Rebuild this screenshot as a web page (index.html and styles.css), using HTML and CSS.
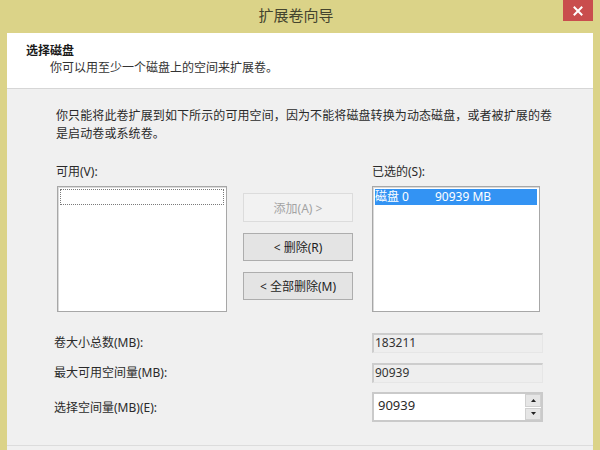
FILE: index.html
```html
<!DOCTYPE html>
<html lang="zh-CN">
<head>
<meta charset="utf-8">
<title>扩展卷向导</title>
<link rel="stylesheet" href="styles.css">
</head>
<body>
<div class="window">
  <div class="titlebar">
    <div></div>
    <div class="title">扩展卷向导</div>
    <div class="tb-right">
      <div class="close"><svg width="10" height="10" viewBox="0 0 10 10"><path d="M1.5 1.5L8.5 8.5M8.5 1.5L1.5 8.5" stroke="#fff" stroke-width="2" stroke-linecap="square"/></svg></div>
    </div>
  </div>
  <div class="client">
    <div class="header">
      <div class="h-title">选择磁盘</div>
      <div class="h-sub">你可以用至少一个磁盘上的空间来扩展卷。</div>
    </div>
    <div class="body">
      <p class="intro">你只能将此卷扩展到如下所示的可用空间，因为不能将磁盘转换为动态磁盘，或者被扩展的卷<br>是启动卷或系统卷。</p>
      <div class="picker">
        <div class="lbl">可用(V):</div>
        <div></div>
        <div class="lbl">已选的(S):</div>
        <div class="list list-left"><div class="focus"></div></div>
        <div class="btns">
          <div class="btn disabled">添加(A) &gt;</div>
          <div class="btn">&lt; 删除(R)</div>
          <div class="btn">&lt; 全部删除(M)</div>
        </div>
        <div class="list list-right">
          <div class="sel"><span class="sel-name">磁盘 0</span><span>90939 MB</span></div>
        </div>
      </div>
      <div class="fields">
        <div class="f-lbl">卷大小总数(MB):</div>
        <div class="ro">183211</div>
        <div class="f-lbl">最大可用空间量(MB):</div>
        <div class="ro">90939</div>
        <div class="f-lbl">选择空间量(MB)(E):</div>
        <div class="spin">
          <div class="spin-val">90939</div>
          <div class="spin-btns">
            <div class="sb"><svg width="5" height="3" viewBox="0 0 5 3"><path d="M0 3L2.5 0L5 3Z" fill="#222"/></svg></div>
            <div class="sb"><svg width="5" height="3" viewBox="0 0 5 3"><path d="M0 0L5 0L2.5 3Z" fill="#222"/></svg></div>
          </div>
        </div>
      </div>
    </div>
    <div class="footer"></div>
  </div>
</div>
</body>
</html>
```
FILE: styles.css
```css
* { box-sizing: border-box; }
html, body { margin: 0; padding: 0; }
body {
  width: 600px;
  height: 450px;
  overflow: hidden;
  font-family: "Noto Sans", "Noto Sans CJK SC", sans-serif;
  font-size: 12px;
  color: #262626;
}
.window {
  width: 600px;
  height: 450px;
  background: #dbd388;
  display: flex;
  flex-direction: column;
  padding: 0 7px;
}
.titlebar {
  height: 33px;
  flex: none;
  display: grid;
  grid-template-columns: 1fr auto 1fr;
  margin: 0 -7px;
}
.title {
  font-family: "Noto Sans CJK SC", sans-serif;
  font-size: 15px;
  line-height: 30px;
  color: #44442e;
  padding-right: 8px;
}
.tb-right {
  display: flex;
  justify-content: flex-end;
  padding-right: 7px;
}
.close {
  width: 30px;
  height: 21px;
  background: #c94d4d;
  display: flex;
  align-items: center;
  justify-content: center;
}
.client {
  flex: 1;
  background: #f0f0f0;
  display: flex;
  flex-direction: column;
}
.header {
  height: 56px;
  flex: none;
  background: #fff;
  border-bottom: 1px solid #d6d6d6;
  padding: 9px 0 0 19px;
}
.h-title {
  font-family: "Noto Sans CJK SC", sans-serif;
  font-weight: 700;
  line-height: 16px;
  color: #1a1a1a;
}
.h-sub {
  font-family: "Noto Sans CJK SC", sans-serif;
  line-height: 16px;
  margin: 1px 0 0 24px;
  color: #333;
}
.body {
  flex: 1;
  padding-top: 17px;
}
.intro {
  margin: 0 0 0 49px;
  line-height: 18px;
  font-family: "Noto Sans CJK SC", sans-serif;
  letter-spacing: 0.1px;
  color: #2a2a2a;
}
.picker {
  margin: 22px 0 0 49px;
  display: grid;
  grid-template-columns: 171px 110px 171px;
  column-gap: 16px;
  row-gap: 6px;
}
.picker .list-right, .picker .lbl:nth-child(3) { margin-left: 3px; }
.lbl {
  line-height: 16px;
  color: #2a2a2a;
}
.list {
  height: 126px;
  background: #fff;
  border: 1px solid #a7a7a7;
  box-shadow: inset 1px 1px 0 #dadada;
  padding: 2px;
}
.list-left { margin-left: 1px; }
.focus {
  height: 16px;
  border: 1px dotted #7a7a7a;
}
.sel {
  height: 16px;
  background: #3393f3;
  color: #fff;
  line-height: 16px;
  display: flex;
}
.sel-name { width: 60px; }
.btns {
  padding-top: 7px;
  display: flex;
  flex-direction: column;
  gap: 11px;
}
.btn {
  height: 28px;
  border: 1px solid #adadad;
  background: #e4e4e4;
  display: flex;
  align-items: center;
  justify-content: center;
  color: #1e1e1e;
}
.btn.disabled {
  height: 29px;
  background: #f2f2f2;
  border-color: #dcdcdc;
  color: #a3a3a3;
}
.fields {
  margin: 21px 0 0 47px;
  display: grid;
  grid-template-columns: 318px 171px;
  row-gap: 10px;
  align-items: center;
}
.f-lbl {
  line-height: 16px;
  color: #2a2a2a;
}
.ro {
  height: 20px;
  border-top: 2px solid #cdcdcd;
  border-left: 2px solid #cdcdcd;
  border-right: 1px solid #e6e6e6;
  border-bottom: 1px solid #e6e6e6;
  background: #eeeeee;
  line-height: 16px;
  padding-left: 1px;
  color: #333;
}
.spin {
  height: 30px;
  margin-top: -1px;
  border: 2px solid #cacaca;
  background: #fff;
  display: flex;
}
.spin-val {
  flex: 1;
  padding: 3px 0 0 4px;
  line-height: 16px;
  font-size: 13px;
  color: #2a2a2a;
}
.spin-btns {
  width: 16px;
  display: flex;
  flex-direction: column;
  gap: 1px;
  background: #fff;
}
.sb {
  flex: 1;
  background: #e6e6e6;
  border: 1px solid #d0d0d0;
  display: flex;
  align-items: center;
  justify-content: center;
}
.footer {
  height: 5px;
  flex: none;
  border-top: 1px solid #dcdcdc;
  background: #f0f0f0;
}
```
